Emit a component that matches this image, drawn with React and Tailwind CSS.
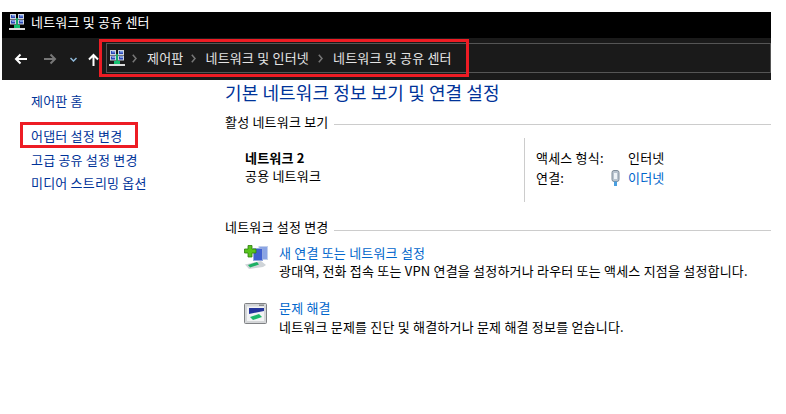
const font = "font-['Noto_Sans_CJK_KR','Liberation_Sans',sans-serif]";

function NetworkIcon({ className }) {
  return (
    <svg className={className} viewBox="0 0 16 16">
      <rect x="1" y="0" width="6" height="5" fill="#cfd6e0" />
      <rect x="9" y="0" width="6" height="5" fill="#cfd6e0" />
      <rect x="1" y="5.500" width="6" height="5" fill="#cfd6e0" />
      <rect x="9" y="5.500" width="6" height="5" fill="#cfd6e0" />
      <path d="M2 1h4v3H2zM10 1h4v3h-4zM2 6.500h4v3H2zM10 6.500h4v3h-4z" fill="#2c48b8" />
      <path d="M3 1h3v1.500H3zM11 1h3v1.500h-3zM3 6.500h3V8H3zM11 6.500h3V8h-3z" fill="#7fa0e8" />
      <rect x="7" y="4" width="2" height="8" fill="#18a868" />
      <rect x="5" y="11" width="6" height="3" fill="#16c070" />
      <rect x="0" y="14" width="16" height="2" fill="#dcdcdc" />
    </svg>
  );
}

function AddNetworkIcon() {
  return (
    <svg className="w-6 h-6 shrink-0" viewBox="0 0 24 24">
      <rect x="15" y="1.500" width="8.500" height="13" fill="#8aa4e4" stroke="#c2cfec" />
      <rect x="9.500" y="3.500" width="9" height="12" fill="#3f5fd0" stroke="#93a8de" />
      <path d="M1 19.500 L17 16 L22 20 L19 22 L5 24 Z" fill="#cfd4d8" />
      <path d="M4 20 L13 17 L15 19.500 L6 22.500 Z" fill="#1cb064" />
      <path d="M4 .5 H8 V4 H12 V8 H8 V12 H4 V8 H.5 V4 H4 Z" fill="#58c41c" stroke="#2f7f10" strokeWidth="0.8" />
    </svg>
  );
}

function TroubleshootIcon() {
  return (
    <svg className="w-6 h-6 mt-[3px] shrink-0" viewBox="0 0 24 24">
      <rect x="0.500" y="0.500" width="22" height="20" rx="1" fill="#d4d6d8" stroke="#7f8184" />
      <rect x="3" y="3.500" width="17" height="14.500" fill="#f2f3f4" />
      <path d="M5 5 H20 V8 L5 11 Z" fill="#25359c" />
      <path d="M6 14 L15 11 L18 14 L9 17 Z" fill="#1cb868" />
      <rect x="15" y="1.500" width="5" height="1.500" fill="#8c8e90" />
    </svg>
  );
}

function Chevron() {
  return (
    <svg className="w-[5px] h-[9px] shrink-0" viewBox="0 0 5 9" fill="none" stroke="#777" strokeWidth="1.500">
      <path d="M.8 .8 4 4.500 .8 8.200" />
    </svg>
  );
}

export default function App() {
  return (
    <div className={`w-[786px] h-[414px] overflow-hidden bg-white pl-[2px] text-[13px] tracking-[0.2px] ${font}`}>
      <div className="w-[769px]">
        <div className="h-3" />

        {/* title bar */}
        <div className="h-[26px] bg-black flex pl-[7px] pt-[2px] gap-[6px] text-white">
          <NetworkIcon className="w-4 h-4 shrink-0" />
          <span className="leading-4">네트워크 및 공유 센터</span>
        </div>

        {/* address bar */}
        <div className="h-[42px] bg-[#1a1a1a] flex items-start pt-[5px] pl-[12px]">
          <svg className="w-[13px] h-[12px] mt-[10px] mr-[17px] shrink-0" viewBox="0 0 13 12" fill="none" stroke="#fff" strokeWidth="2">
            <path d="M13 6H2M6.500 1.500 2 6l4.500 4.500" />
          </svg>
          <svg className="w-[13px] h-[12px] mt-[10px] mr-[13px] shrink-0" viewBox="0 0 13 12" fill="none" stroke="#777" strokeWidth="2">
            <path d="M0 6h11M6.500 1.500 11 6l-4.500 4.500" />
          </svg>
          <svg className="w-[7px] h-[5px] mt-[14px] mr-[11px] shrink-0" viewBox="0 0 7 5" fill="none" stroke="#8fb8d8" strokeWidth="1.500">
            <path d="M.5 1l3 3 3-3" />
          </svg>
          <svg className="w-[11px] h-[13px] mt-[10px] mr-[7px] shrink-0" viewBox="0 0 11 13" fill="none" stroke="#fff" strokeWidth="2">
            <path d="M5.500 13V2M1 6.500 5.500 2 10 6.500" />
          </svg>
          <div className="relative flex-1 h-[30px] border border-[#555] flex items-center pl-[2px] text-[#e4e4e4]">
            <NetworkIcon className="w-4 h-4 shrink-0 mr-[7px]" />
            <Chevron />
            <span className="ml-[10px] leading-4">제어판</span>
            <span className="ml-[8px] mr-[9px]"><Chevron /></span>
            <span className="leading-4">네트워크 및 인터넷</span>
            <span className="ml-[9px] mr-[10px]"><Chevron /></span>
            <span className="leading-4">네트워크 및 공유 센터</span>
            {/* red highlight drawn over the address field */}
            <div className="absolute -left-[8px] -top-[5px] w-[370px] h-[38px] border-[3px] border-[#ed1c24]" />
          </div>
        </div>

        <div className="flex">
          {/* sidebar */}
          <div className="w-[223px] shrink-0 pl-[29px] pt-[12px] text-[#003399] flex flex-col">
            <span className="h-[18px] leading-[18px]">제어판 홈</span>
            <span className="mt-[12px] -ml-[11px] w-[118px] h-[26px] border-[3px] border-[#ed1c24] pl-[8px] leading-[21px] whitespace-nowrap">어댑터 설정 변경</span>
            <span className="mt-[3px] h-[18px] leading-[18px]">고급 공유 설정 변경</span>
            <span className="mt-[5px] h-[18px] leading-[18px]">미디어 스트리밍 옵션</span>
          </div>

          {/* main */}
          <div className="flex-1 text-black">
            <h1 className="text-[18px] tracking-[0.1px] font-normal leading-6 text-[#003399]">기본 네트워크 정보 보기 및 연결 설정</h1>

            <div className="flex items-center gap-[5px] mt-[9px]">
              <span className="leading-[18px]">활성 네트워크 보기</span>
              <div className="flex-1 h-px bg-[#ccc] mt-[5px]" />
            </div>

            <div className="flex mt-[7px] h-[64px]">
              <div className="w-[299px] pl-5 pt-[11px]">
                <div className="font-bold leading-[18px]">네트워크 2</div>
                <div className="leading-[18px]">공용 네트워크</div>
              </div>
              <div className="border-l border-[#ccc] pl-[11px] pt-[11px]">
                <div className="flex leading-[18px]">
                  <span className="w-[92px]">액세스 형식:</span>
                  <span>인터넷</span>
                </div>
                <div className="flex items-center leading-[18px] mt-[2px]">
                  <span className="w-[75px]">연결:</span>
                  <svg className="w-[9px] h-[16px] mr-2 shrink-0" viewBox="0 0 9 16">
                    <rect x="1" y="0.500" width="7" height="11" rx="2" fill="#b9c4cf" stroke="#7f8c99" />
                    <rect x="3" y="3" width="3" height="6" fill="#eef3f7" />
                    <rect x="3" y="11.500" width="3" height="4.500" fill="#4a9fe0" />
                  </svg>
                  <span className="text-[#0066cc]">이더넷</span>
                </div>
              </div>
            </div>

            <div className="flex items-center gap-[5px] mt-[16px]">
              <span className="leading-[18px]">네트워크 설정 변경</span>
              <div className="flex-1 h-px bg-[#ccc] mt-[6px]" />
            </div>

            <div className="flex gap-[11px] pl-[19px] mt-[9px]">
              <AddNetworkIcon />
              <div className="-mt-[1px]">
                <div className="text-[#0066cc] leading-[18px]">새 연결 또는 네트워크 설정</div>
                <div className="leading-[18px] whitespace-nowrap">광대역, 전화 접속 또는 VPN 연결을 설정하거나 라우터 또는 액세스 지점을 설정합니다.</div>
              </div>
            </div>

            <div className="flex gap-[11px] pl-[19px] mt-[20px]">
              <TroubleshootIcon />
              <div className="-mt-[1px]">
                <div className="text-[#0066cc] leading-[18px]">문제 해결</div>
                <div className="leading-[18px] mt-px whitespace-nowrap">네트워크 문제를 진단 및 해결하거나 문제 해결 정보를 얻습니다.</div>
              </div>
            </div>
          </div>
        </div>
      </div>
    </div>
  );
}
